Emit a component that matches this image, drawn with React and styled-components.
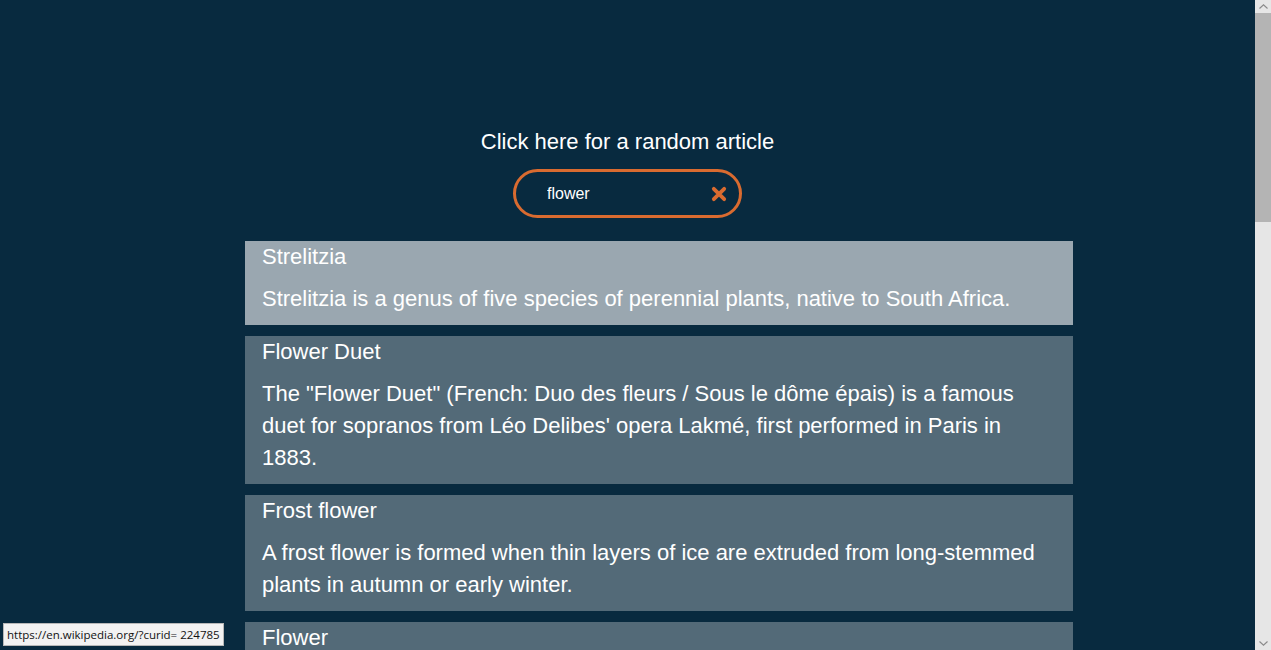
import React from "react";
import styled, { createGlobalStyle } from "styled-components";

const SANS = `"Liberation Sans", Arial, Helvetica, sans-serif`;

const GlobalStyle = createGlobalStyle`
  html, body {
    margin: 0;
    padding: 0;
    background: #082a3f;
  }
  body {
    font-family: ${SANS};
    color: #ffffff;
    padding-right: 16px;
  }
`;

const Page = styled.div`
  padding-top: 129px;
  padding-bottom: 40px;
`;

const Header = styled.header`
  display: flex;
  flex-direction: column;
  align-items: center;
`;

const RandomLink = styled.a`
  font-family: ${SANS};
  font-size: 22px;
  line-height: 25px;
  color: #ffffff;
  text-decoration: none;
  cursor: pointer;
`;

const SearchBox = styled.div`
  margin-top: 15px;
  width: 229px;
  height: 49px;
  box-sizing: border-box;
  border: 3px solid #d96b30;
  border-radius: 25px;
  display: flex;
  align-items: center;
  padding: 0 12px 0 31px;
`;

const SearchInput = styled.input`
  flex: 1;
  min-width: 0;
  background: transparent;
  border: none;
  outline: none;
  color: #ffffff;
  font-family: ${SANS};
  font-size: 16px;
  padding: 0;
`;

const ClearButton = styled.button`
  background: none;
  border: none;
  padding: 0;
  display: flex;
  align-items: center;
  cursor: pointer;
`;

const Results = styled.ul`
  list-style: none;
  margin: 23px 0 0 245px;
  padding: 0;
  width: 828px;
  display: flex;
  flex-direction: column;
  gap: 11px;
`;

const Card = styled.li`
  background: ${(p) => (p.$active ? "#9aa7b0" : "#536a78")};
  padding: 4px 17px 10px;
  cursor: pointer;
`;

const CardTitle = styled.div`
  font-family: ${SANS};
  font-size: 22px;
  line-height: 24px;
`;

const CardText = styled.p`
  margin: 14px 0 0;
  font-family: ${SANS};
  font-size: 22px;
  line-height: 32px;
`;

const StatusBubble = styled.div`
  position: fixed;
  left: 3px;
  bottom: 4px;
  height: 23px;
  box-sizing: border-box;
  padding: 0 3px;
  background: #f2f2f2;
  border: 1px solid #b8b8b8;
  color: #111;
  font-family: "Open Sans", "Noto Sans", sans-serif;
  font-size: 11.5px;
  line-height: 21px;
  white-space: nowrap;
`;

const Scrollbar = styled.div`
  position: fixed;
  top: 0;
  right: 0;
  bottom: 0;
  width: 16px;
  background: #e6e6e6;
  display: flex;
  flex-direction: column;
`;

const ScrollArrow = styled.div`
  height: 13px;
  display: flex;
  align-items: center;
  justify-content: center;
`;

const ScrollTrack = styled.div`
  flex: 1;
  display: flex;
  flex-direction: column;
`;

const ScrollThumb = styled.div`
  height: 209px;
  background: #b4b4b4;
`;

const results = [
  {
    title: "Strelitzia",
    text: "Strelitzia is a genus of five species of perennial plants, native to South Africa.",
  },
  {
    title: "Flower Duet",
    text: "The \"Flower Duet\" (French: Duo des fleurs / Sous le dôme épais) is a famous duet for sopranos from Léo Delibes' opera Lakmé, first performed in Paris in 1883.",
  },
  {
    title: "Frost flower",
    text: "A frost flower is formed when thin layers of ice are extruded from long-stemmed plants in autumn or early winter.",
  },
  {
    title: "Flower",
    text: "A flower, sometimes known as a bloom or blossom, is the reproductive structure found in flowering plants.",
  },
  {
    title: "Flower Power",
    text: "Flower power was a slogan used during the late 1960s and early 1970s as a symbol of passive resistance and non-violence ideology.",
  },
  {
    title: "Wallflower",
    text: "Erysimum (wallflower) is a genus of flowering plants in the cabbage family, Brassicaceae.",
  },
  {
    title: "Flowers in the Attic",
    text: "Flowers in the Attic is a 1979 Gothic novel by V. C. Andrews.",
  },
  {
    title: "Sunflower",
    text: "Helianthus annuus, the common sunflower, is a large annual forb of the genus Helianthus grown as a crop for its edible oil and edible fruits.",
  },
  {
    title: "Corpse flower",
    text: "Amorphophallus titanum, the titan arum, is a flowering plant with the largest unbranched inflorescence in the world.",
  },
  {
    title: "Flower Drum Song",
    text: "Flower Drum Song is the eighth musical by the team of Rodgers and Hammerstein.",
  },
];

function XIcon() {
  return (
    <svg width="16" height="16" viewBox="0 0 16 16" aria-hidden="true">
      <path
        d="M2.8 2.8 L13.2 13.2 M13.2 2.8 L2.8 13.2"
        stroke="#d96b30"
        strokeWidth="3.8"
        strokeLinecap="round"
        fill="none"
      />
    </svg>
  );
}

function Chevron({ up }) {
  return (
    <svg width="9" height="5" viewBox="0 0 9 5" aria-hidden="true">
      <path
        d={up ? "M0.5 4.5 L4.5 0.8 L8.5 4.5" : "M0.5 0.5 L4.5 4.2 L8.5 0.5"}
        stroke="#8a8a8a"
        strokeWidth="1.1"
        fill="none"
      />
    </svg>
  );
}

export default function App() {
  return (
    <>
      <GlobalStyle />
      <Page>
        <Header>
          <RandomLink>Click here for a random article</RandomLink>
          <SearchBox>
            <SearchInput defaultValue="flower" />
            <ClearButton aria-label="Clear">
              <XIcon />
            </ClearButton>
          </SearchBox>
        </Header>
        <Results>
          {results.map((r, i) => (
            <Card key={r.title} $active={i === 0}>
              <CardTitle>{r.title}</CardTitle>
              <CardText>{r.text}</CardText>
            </Card>
          ))}
        </Results>
      </Page>
      <StatusBubble>https://en.wikipedia.org/?curid= 224785</StatusBubble>
      <Scrollbar>
        <ScrollArrow>
          <Chevron up />
        </ScrollArrow>
        <ScrollTrack>
          <ScrollThumb />
        </ScrollTrack>
        <ScrollArrow>
          <Chevron />
        </ScrollArrow>
      </Scrollbar>
    </>
  );
}
